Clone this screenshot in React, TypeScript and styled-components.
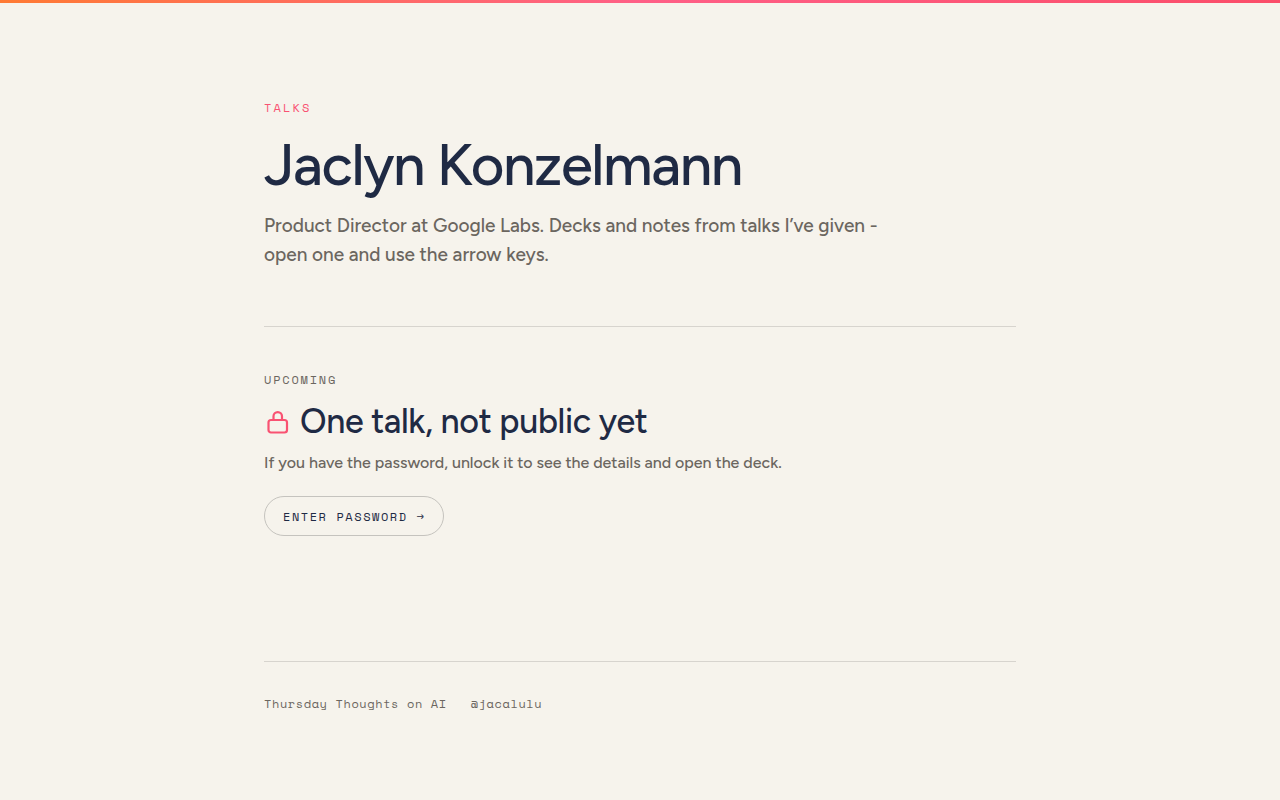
import React from "react";
import styled, { createGlobalStyle } from "styled-components";

const sans = `Figtree, Lato, "Liberation Sans", sans-serif`;
const mono = `"Space Mono", "Liberation Mono", monospace`;
const ink = "#1f2a44";
const muted = "#6b665f";
const accent = "#f95272";
const line = "#d7d4ce";

const GlobalStyle = createGlobalStyle`
  *, *::before, *::after { box-sizing: border-box; }
  body {
    margin: 0;
    background: #f6f3ec;
    color: ${ink};
    font-family: ${sans};
    -webkit-font-smoothing: antialiased;
  }
`;

const TopBar = styled.div`
  height: 3px;
  background: linear-gradient(90deg, #ff7a33, #ff5f87 50%, #fb4d69);
`;

const Page = styled.div`
  max-width: 800px;
  margin: 0 auto;
  padding: 96px 24px 80px;
`;

const Header = styled.header`
  padding-bottom: 57px;
  border-bottom: 1px solid ${line};
`;

const Label = styled.p<{ $accent?: boolean }>`
  margin: 0;
  font-family: ${mono};
  font-size: 12px;
  line-height: 18px;
  letter-spacing: ${(p) => (p.$accent ? "0.18em" : "0.15em")};
  text-transform: uppercase;
  color: ${(p) => (p.$accent ? accent : muted)};
`;

const Name = styled.h1`
  margin: 16px 0 14px;
  font-size: 58px;
  line-height: 64px;
  font-weight: 500;
  letter-spacing: -0.025em;
`;

const Intro = styled.p`
  margin: 0;
  max-width: 640px;
  font-size: 19px;
  line-height: 29px;
  font-weight: 500;
  color: ${muted};
`;

const Upcoming = styled.section`
  padding: 44px 0 125px;
`;

const TalkTitle = styled.h2`
  display: flex;
  align-items: center;
  gap: 8px;
  margin: 13px 0 9px;
  font-size: 34px;
  line-height: 40px;
  font-weight: 500;
  letter-spacing: -0.01em;
`;

const LockIcon = styled.svg`
  flex: none;
  width: 28px;
  height: 28px;
  color: ${accent};
`;

const Note = styled.p`
  margin: 0 0 21px;
  font-size: 16px;
  line-height: 24px;
  font-weight: 500;
  color: ${muted};
`;

const PillButton = styled.button`
  height: 40px;
  padding: 0 18px;
  border: 1px solid #c5c3be;
  border-radius: 20px;
  background: transparent;
  color: ${ink};
  font-family: ${mono};
  font-size: 12px;
  letter-spacing: 0.13em;
  text-transform: uppercase;
  cursor: pointer;
`;

const Footer = styled.footer`
  display: flex;
  flex-wrap: wrap;
  gap: 24px;
  padding-top: 33px;
  border-top: 1px solid ${line};
`;

const FooterLink = styled.a`
  font-family: ${mono};
  font-size: 12px;
  line-height: 18px;
  letter-spacing: 0.05em;
  color: ${muted};
  text-decoration: none;
`;

export default function App() {
  return (
    <>
      <GlobalStyle />
      <TopBar />
      <Page>
        <Header>
          <Label $accent>Talks</Label>
          <Name>Jaclyn Konzelmann</Name>
          <Intro>
            Product Director at Google Labs. Decks and notes from talks I’ve given - open one and
            use the arrow keys.
          </Intro>
        </Header>
        <Upcoming>
          <Label>Upcoming</Label>
          <TalkTitle>
            <LockIcon viewBox="0 0 28 28" fill="none" stroke="currentColor" strokeWidth="2.2" aria-hidden="true">
              <rect x="4.5" y="12" width="18.5" height="12.5" rx="2.5" />
              <path d="M9.5 12V8.3a4.25 4.25 0 0 1 8.5 0V12" />
            </LockIcon>
            One talk, not public yet
          </TalkTitle>
          <Note>If you have the password, unlock it to see the details and open the deck.</Note>
          <PillButton type="button">Enter password →</PillButton>
        </Upcoming>
        <Footer>
          <FooterLink href="#thursday-thoughts">Thursday Thoughts on AI</FooterLink>
          <FooterLink href="#jacalulu">@jacalulu</FooterLink>
        </Footer>
      </Page>
    </>
  );
}
